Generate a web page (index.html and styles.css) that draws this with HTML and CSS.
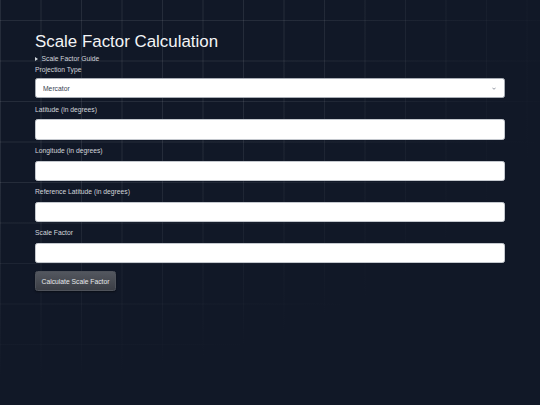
FILE: index.html
```html
<!DOCTYPE html>
<html lang="en">
<head>
<meta charset="utf-8">
<title>Scale Factor Calculation</title>
<link rel="stylesheet" href="styles.css">
</head>
<body>
<main class="page">
  <h1 class="title">Scale Factor Calculation</h1>
  <details class="guide">
    <summary class="guide-summary">Scale Factor Guide</summary>
  </details>
  <form class="form">
    <div class="field field-first">
      <label class="label" for="proj">Projection Type</label>
      <div class="select-wrap">
        <select class="control select" id="proj">
          <option>Mercator</option>
          <option>Transverse Mercator</option>
          <option>Lambert Conformal Conic</option>
        </select>
        <svg class="chevron" viewBox="0 0 6 4" width="4" height="3"><path d="M0.6 0.8 L3 3.2 L5.4 0.8" fill="none" stroke="#6b7280" stroke-width="1.1"/></svg>
      </div>
    </div>
    <div class="field">
      <label class="label" for="lat">Latitude (in degrees)</label>
      <input class="control" id="lat" type="text">
    </div>
    <div class="field">
      <label class="label" for="lon">Longitude (in degrees)</label>
      <input class="control" id="lon" type="text">
    </div>
    <div class="field">
      <label class="label" for="reflat">Reference Latitude (in degrees)</label>
      <input class="control" id="reflat" type="text">
    </div>
    <div class="field">
      <label class="label" for="sf">Scale Factor</label>
      <input class="control" id="sf" type="text">
    </div>
    <button class="btn" type="button">Calculate Scale Factor</button>
  </form>
</main>
</body>
</html>
```

FILE: styles.css
```css
html {
  margin: 0;
  padding: 0;
  height: 100%;
  background: #111827;
}

body {
  margin: 0;
  padding: 0;
  height: 100%;
  font-family: "Liberation Sans", Arial, sans-serif;
  color: #d1d5db;
  overflow: hidden;
  background-color: #111827;
  background-image:
    radial-gradient(580px 380px at 0 0, rgba(17, 24, 39, 0) 50%, rgba(17, 24, 39, 1) 100%),
    linear-gradient(to right, rgba(255, 255, 255, 0.085) 1px, transparent 1px),
    linear-gradient(to bottom, rgba(255, 255, 255, 0.085) 1px, transparent 1px);
  background-size: 100% 100%, 40.5px 40.5px, 40.5px 40.5px;
  background-position: 0 0, 0 20px, 0 20px;
  background-repeat: no-repeat, repeat, repeat;
}

.page {
  padding: 31.5px 35px 0 35px;
  display: flex;
  flex-direction: column;
}

.title {
  margin: 0;
  font-size: 16.9px;
  font-weight: 400;
  line-height: 19.4px;
  color: #f3f4f6;
}

.guide {
  margin-top: 4.3px;
}

.guide-summary {
  list-style: none;
  display: flex;
  align-items: center;
  font-size: 6.75px;
  line-height: 7.8px;
  color: #d1d5db;
  cursor: pointer;
}

.guide-summary::-webkit-details-marker {
  display: none;
}

.guide-summary::before {
  content: "";
  width: 0;
  height: 0;
  border-left: 3.5px solid #d1d5db;
  border-top: 2px solid transparent;
  border-bottom: 2px solid transparent;
  margin-right: 3.5px;
}

.form {
  display: flex;
  flex-direction: column;
  margin-top: 2.6px;
}

.field {
  display: flex;
  flex-direction: column;
  margin-bottom: 7.4px;
}

.label {
  font-size: 6.75px;
  line-height: 7.8px;
  color: #d1d5db;
  margin-bottom: 5.8px;
}

.field-first .label {
  margin-bottom: 4.9px;
}

.control {
  box-sizing: border-box;
  width: 470px;
  height: 20.2px;
  margin: 0;
  padding: 0 7px;
  border: 1px solid #c4c8ce;
  border-radius: 2.5px;
  background: #ffffff;
  font-family: "Liberation Sans", Arial, sans-serif;
  font-size: 6.75px;
  color: #374151;
  outline: none;
}

.select-wrap {
  position: relative;
  width: 470px;
}

.select {
  -webkit-appearance: none;
  appearance: none;
  display: block;
  border-color: #a8adb5;
}

.chevron {
  position: absolute;
  right: 9px;
  top: 8.5px;
  pointer-events: none;
}

.btn {
  align-self: flex-start;
  box-sizing: border-box;
  height: 20px;
  width: 81px;
  margin-top: 0.6px;
  padding: 0;
  border: 1px solid #4f535b;
  border-radius: 2.5px;
  background: linear-gradient(to bottom, #53575f, #3b3e45);
  box-shadow: 0 1px 2px rgba(0, 0, 0, 0.45);
  color: #e5e7eb;
  font-family: "Liberation Sans", Arial, sans-serif;
  font-size: 6.75px;
  cursor: pointer;
}
```
